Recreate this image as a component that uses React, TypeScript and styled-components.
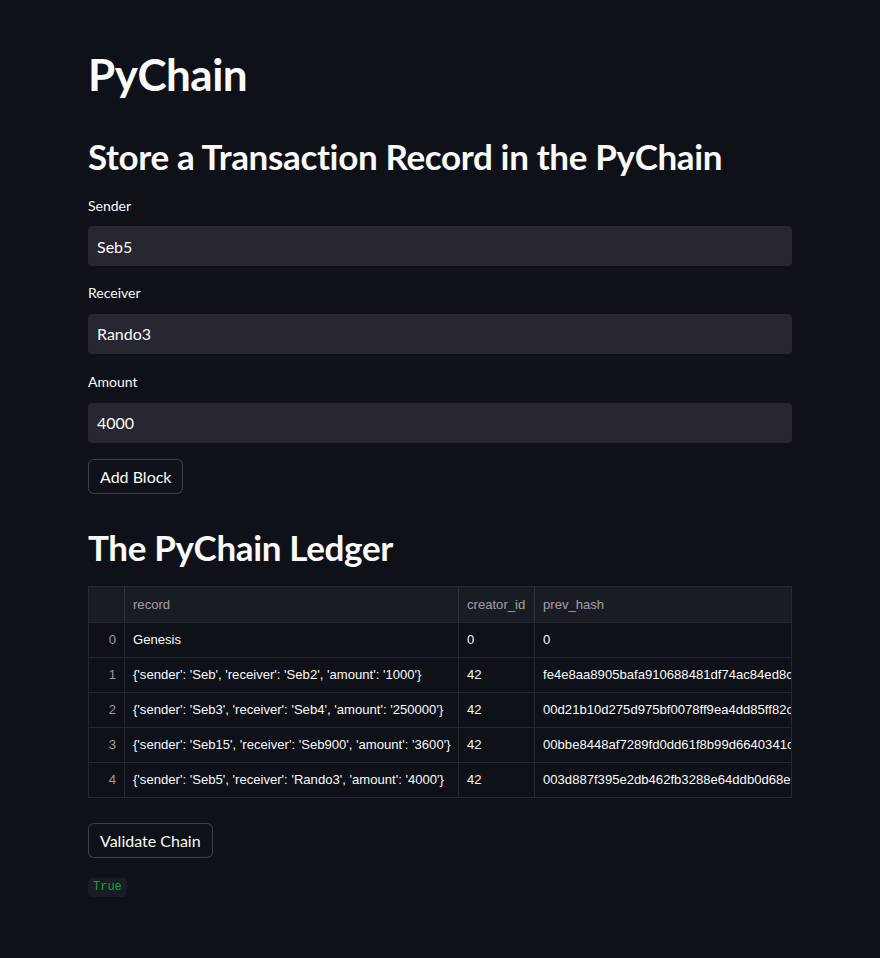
import React from "react";
import styled, { createGlobalStyle } from "styled-components";

const Global = createGlobalStyle`
  html, body { margin: 0; padding: 0; background: #0e1117; }
  body { font-family: Lato, "Noto Sans", sans-serif; color: #fafafa; }
  * { box-sizing: border-box; }
`;

const Page = styled.main`
  width: 880px;
  min-height: 958px;
  background: #0e1117;
  padding: 48px 88px 40px 88px;
`;

const Column = styled.div`
  width: 704px;
  display: flex;
  flex-direction: column;
`;

const Title = styled.h1`
  margin: 0;
  font-size: 44px;
  font-weight: 700;
  line-height: 1.2;
  letter-spacing: -0.5px;
`;

const Heading = styled.h2<{ $top: number }>`
  margin: ${(p) => p.$top}px 0 0 0;
  font-size: 35px;
  font-weight: 700;
  line-height: 1.2;
  letter-spacing: -0.35px;
`;

const Field = styled.div<{ $top: number }>`
  margin-top: ${(p) => p.$top}px;
  display: flex;
  flex-direction: column;
  gap: 11px;
`;

const Label = styled.label`
  font-size: 14px;
  line-height: 1.4;
  color: #fafafa;
`;

const Input = styled.div`
  height: 40px;
  background: #262730;
  border-radius: 4px;
  padding: 0 9px;
  display: flex;
  align-items: center;
  font-size: 16px;
  color: #fafafa;
`;

const Button = styled.button<{ $top: number }>`
  align-self: flex-start;
  margin-top: ${(p) => p.$top}px;
  height: 35px;
  padding: 0 11px;
  background: #0e1117;
  color: #fafafa;
  border: 1px solid rgba(250, 250, 250, 0.2);
  border-radius: 6px;
  font-family: Lato, "Noto Sans", sans-serif;
  font-size: 16px;
`;

const Table = styled.div`
  margin-top: 18px;
  width: 704px;
  border: 1px solid rgba(250, 250, 250, 0.1);
  overflow: hidden;
  font-family: "Liberation Sans", Arial, sans-serif;
  font-size: 13.1px;
`;

const Row = styled.div<{ $head?: boolean }>`
  display: grid;
  grid-template-columns: 35px 334px 76px 420px;
  height: 35px;
  background: ${(p) => (p.$head ? "#1a1c24" : "#0e1117")};
  color: ${(p) => (p.$head ? "rgba(250,250,250,0.6)" : "#fafafa")};
  & + & { border-top: 1px solid rgba(250, 250, 250, 0.1); }
`;

const Cell = styled.div<{ $index?: boolean }>`
  display: flex;
  align-items: center;
  justify-content: ${(p) => (p.$index ? "flex-end" : "flex-start")};
  padding: 0 8px;
  white-space: nowrap;
  overflow: hidden;
  color: ${(p) => (p.$index ? "rgba(250,250,250,0.6)" : "inherit")};
  & + & { border-left: 1px solid rgba(250, 250, 250, 0.1); }
`;

const Code = styled.code`
  align-self: flex-start;
  margin-top: 20px;
  background: #1a1c24;
  color: #0fa23e;
  border-radius: 4px;
  padding: 2px 5px;
  font-family: "Liberation Mono", "DejaVu Sans Mono", monospace;
  font-size: 12px;
  line-height: 15px;
`;

const rows = [
  ["0", "Genesis", "0", "0"],
  ["1", "{'sender': 'Seb', 'receiver': 'Seb2', 'amount': '1000'}", "42", "fe4e8aa8905bafa910688481df74ac84ed8c1b2"],
  ["2", "{'sender': 'Seb3', 'receiver': 'Seb4', 'amount': '250000'}", "42", "00d21b10d275d975bf0078ff9ea4dd85ff82c3a"],
  ["3", "{'sender': 'Seb15', 'receiver': 'Seb900', 'amount': '3600'}", "42", "00bbe8448af7289fd0dd61f8b99d6640341cd5e"],
  ["4", "{'sender': 'Seb5', 'receiver': 'Rando3', 'amount': '4000'}", "42", "003d887f395e2db462fb3288e64ddb0d68e1a7f"],
];

export default function App() {
  return (
    <>
      <Global />
      <Page>
        <Column>
          <Title>PyChain</Title>
          <Heading $top={34}>Store a Transaction Record in the PyChain</Heading>
          <Field $top={19}>
            <Label>Sender</Label>
            <Input>Seb5</Input>
          </Field>
          <Field $top={17}>
            <Label>Receiver</Label>
            <Input>Rando3</Input>
          </Field>
          <Field $top={18}>
            <Label>Amount</Label>
            <Input>4000</Input>
          </Field>
          <Button $top={16}>Add Block</Button>
          <Heading $top={32}>The PyChain Ledger</Heading>
          <Table>
            <Row $head>
              <Cell />
              <Cell>record</Cell>
              <Cell>creator_id</Cell>
              <Cell>prev_hash</Cell>
            </Row>
            {rows.map((r) => (
              <Row key={r[0]}>
                <Cell $index>{r[0]}</Cell>
                <Cell>{r[1]}</Cell>
                <Cell>{r[2]}</Cell>
                <Cell>{r[3]}</Cell>
              </Row>
            ))}
          </Table>
          <Button $top={25}>Validate Chain</Button>
          <Code>True</Code>
        </Column>
      </Page>
    </>
  );
}
